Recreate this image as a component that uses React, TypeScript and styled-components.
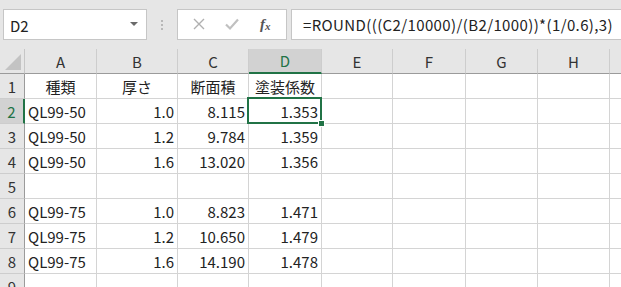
import styled, { createGlobalStyle } from 'styled-components';

const GlobalStyle = createGlobalStyle`
  html, body {
    margin: 0;
    padding: 0;
    background: #ffffff;
  }
  body {
    font-family: "Noto Sans CJK JP", "Noto Sans", sans-serif;
  }
`;

const COLUMNS = [
  { key: 'A', width: 72 },
  { key: 'B', width: 81 },
  { key: 'C', width: 71 },
  { key: 'D', width: 73 },
  { key: 'E', width: 71 },
  { key: 'F', width: 73 },
  { key: 'G', width: 72 },
  { key: 'H', width: 72 },
  { key: 'I', width: 72 },
];

type Align = 'left' | 'center' | 'right';

const ROWS: { label: string; align: Align[]; cells: string[] }[] = [
  { label: '1', align: ['center', 'center', 'center', 'center'], cells: ['種類', '厚さ', '断面積', '塗装係数'] },
  { label: '2', align: ['left', 'right', 'right', 'right'], cells: ['QL99-50', '1.0', '8.115', '1.353'] },
  { label: '3', align: ['left', 'right', 'right', 'right'], cells: ['QL99-50', '1.2', '9.784', '1.359'] },
  { label: '4', align: ['left', 'right', 'right', 'right'], cells: ['QL99-50', '1.6', '13.020', '1.356'] },
  { label: '5', align: ['left', 'right', 'right', 'right'], cells: ['', '', '', ''] },
  { label: '6', align: ['left', 'right', 'right', 'right'], cells: ['QL99-75', '1.0', '8.823', '1.471'] },
  { label: '7', align: ['left', 'right', 'right', 'right'], cells: ['QL99-75', '1.2', '10.650', '1.479'] },
  { label: '8', align: ['left', 'right', 'right', 'right'], cells: ['QL99-75', '1.6', '14.190', '1.478'] },
  { label: '9', align: ['left', 'right', 'right', 'right'], cells: ['', '', '', ''] },
];

const SELECTED_COL = 'D';
const SELECTED_ROW = '2';

const App = () => {
  const template = `25px ${COLUMNS.map((c) => `${c.width}px`).join(' ')}`;

  return (
    <>
      <GlobalStyle />
      <Page>
        <FormulaBar>
          <NameBox>
            <NameText>D2</NameText>
            <DropArrow />
          </NameBox>
          <Grip>
            <span />
            <span />
            <span />
          </Grip>
          <ButtonGroup>
            <IconButton>
              <svg width="14" height="14" viewBox="0 0 14 14">
                <path d="M2 2 L12 12 M12 2 L2 12" stroke="#b0b0b0" strokeWidth="1.4" fill="none" />
              </svg>
            </IconButton>
            <IconButton>
              <svg width="16" height="14" viewBox="0 0 16 14">
                <path d="M2 7.5 L6 11.5 L14 2.5" stroke="#c0c0c0" strokeWidth="2.2" fill="none" />
              </svg>
            </IconButton>
            <FxLabel>
              f<sub>x</sub>
            </FxLabel>
          </ButtonGroup>
          <FormulaInput>=ROUND(((C2/10000)/(B2/1000))*(1/0.6),3)</FormulaInput>
        </FormulaBar>

        <Sheet style={{ gridTemplateColumns: template }}>
          <Corner>
            <CornerTriangle />
          </Corner>
          {COLUMNS.map((c) => (
            <ColHeader key={c.key} $active={c.key === SELECTED_COL}>
              {c.key}
            </ColHeader>
          ))}

          {ROWS.map((row) => (
            <Row key={row.label}>
              <RowHeader $active={row.label === SELECTED_ROW}>{row.label}</RowHeader>
              {COLUMNS.map((c, i) => (
                <Cell
                  key={c.key}
                  $align={row.align[i] || 'left'}
                  $selected={row.label === SELECTED_ROW && c.key === SELECTED_COL}
                >
                  {row.cells[i] || ''}
                </Cell>
              ))}
            </Row>
          ))}
        </Sheet>
      </Page>
    </>
  );
};

const Page = styled.div`
  width: 621px;
  height: 287px;
  overflow: hidden;
  background: #e6e6e6;
`;

const FormulaBar = styled.div`
  display: flex;
  align-items: center;
  height: 49px;
  padding-left: 3px;
  box-sizing: border-box;
  background: #e6e6e6;
  font-family: "Noto Sans CJK JP", "Noto Sans", sans-serif;
`;

const NameBox = styled.div`
  display: flex;
  align-items: center;
  justify-content: space-between;
  width: 144px;
  height: 31px;
  margin-top: -1px;
  padding: 0 8px 0 6px;
  box-sizing: border-box;
  background: #ffffff;
  border: 1px solid #c6c6c6;
`;

const NameText = styled.span`
  font-size: 15px;
  color: #222;
  padding-top: 3px;
`;

const DropArrow = styled.span`
  width: 0;
  height: 0;
  border-left: 4px solid transparent;
  border-right: 4px solid transparent;
  border-top: 4px solid #6a6a6a;
`;

const Grip = styled.div`
  display: flex;
  flex-direction: column;
  gap: 2px;
  width: 30px;
  align-items: center;

  span {
    width: 2px;
    height: 2px;
    background: #b8b8b8;
  }
`;

const ButtonGroup = styled.div`
  display: flex;
  align-items: center;
  justify-content: space-around;
  width: 110px;
  height: 31px;
  margin-top: -1px;
  padding: 0 4px;
  box-sizing: border-box;
  background: #ffffff;
  border: 1px solid #c6c6c6;
`;

const IconButton = styled.span`
  display: flex;
  align-items: center;
  justify-content: center;
  width: 24px;
  height: 20px;
`;

const FxLabel = styled.span`
  font-family: "Liberation Serif", "DejaVu Serif", serif;
  font-style: italic;
  font-weight: bold;
  font-size: 15px;
  color: #555;
  width: 24px;
  text-align: center;

  sub {
    font-size: 11px;
    vertical-align: -1px;
  }
`;

const FormulaInput = styled.div`
  flex: 1;
  height: 31px;
  margin-top: -1px;
  margin-left: 4px;
  margin-right: -4px;
  padding: 1px 0 0 11px;
  box-sizing: border-box;
  display: flex;
  align-items: center;
  background: #ffffff;
  border: 1px solid #c6c6c6;
  font-size: 15px;
  letter-spacing: 0.38px;
  color: #222;
  white-space: nowrap;
  overflow: hidden;
`;

const Sheet = styled.div`
  display: grid;
  grid-auto-rows: 25px;
  background: #ffffff;
  font-family: "Noto Sans CJK JP", "Noto Sans", sans-serif;
  font-size: 15px;
  color: #222;
`;

const Row = styled.div`
  display: contents;
`;

const Corner = styled.div`
  position: relative;
  background: #e6e6e6;
  border-right: 1px solid #c6c6c6;
  border-bottom: 1px solid #9b9b9b;
`;

const CornerTriangle = styled.span`
  position: absolute;
  right: 3px;
  bottom: 3px;
  width: 0;
  height: 0;
  border-left: 16px solid transparent;
  border-bottom: 16px solid #c3c3c3;
`;

const ColHeader = styled.div<{ $active?: boolean }>`
  display: flex;
  align-items: center;
  justify-content: center;
  background: ${({ $active }) => ($active ? '#d2d2d2' : '#e6e6e6')};
  color: ${({ $active }) => ($active ? '#217346' : '#333')};
  border-right: 1px solid #cdcdcd;
  border-bottom: ${({ $active }) => ($active ? '2px solid #217346' : '1px solid #9b9b9b')};
  box-sizing: border-box;
  line-height: 1;
`;

const RowHeader = styled.div<{ $active?: boolean }>`
  display: flex;
  align-items: center;
  justify-content: center;
  background: ${({ $active }) => ($active ? '#d2d2d2' : '#e6e6e6')};
  color: ${({ $active }) => ($active ? '#217346' : '#333')};
  border-right: ${({ $active }) => ($active ? '2px solid #217346' : '1px solid #9b9b9b')};
  border-bottom: 1px solid #cdcdcd;
  box-sizing: border-box;
  line-height: 1;
`;

const Cell = styled.div<{ $align: Align; $selected?: boolean }>`
  position: relative;
  display: flex;
  align-items: center;
  justify-content: ${({ $align }) =>
    $align === 'left' ? 'flex-start' : $align === 'right' ? 'flex-end' : 'center'};
  padding: 1px 3px 0;
  border-right: 1px solid #d4d4d4;
  border-bottom: 1px solid #d4d4d4;
  box-sizing: border-box;
  white-space: nowrap;
  overflow: visible;
  line-height: 1;

  ${({ $selected }) =>
    $selected &&
    `
    &::after {
      content: '';
      position: absolute;
      left: -2px;
      top: -2px;
      right: -1px;
      bottom: -1px;
      border: 2px solid #217346;
      pointer-events: none;
    }
    &::before {
      content: '';
      position: absolute;
      right: -4px;
      bottom: -4px;
      width: 5px;
      height: 5px;
      background: #217346;
      border: 1px solid #ffffff;
      z-index: 2;
    }
  `}
`;

export default App;
